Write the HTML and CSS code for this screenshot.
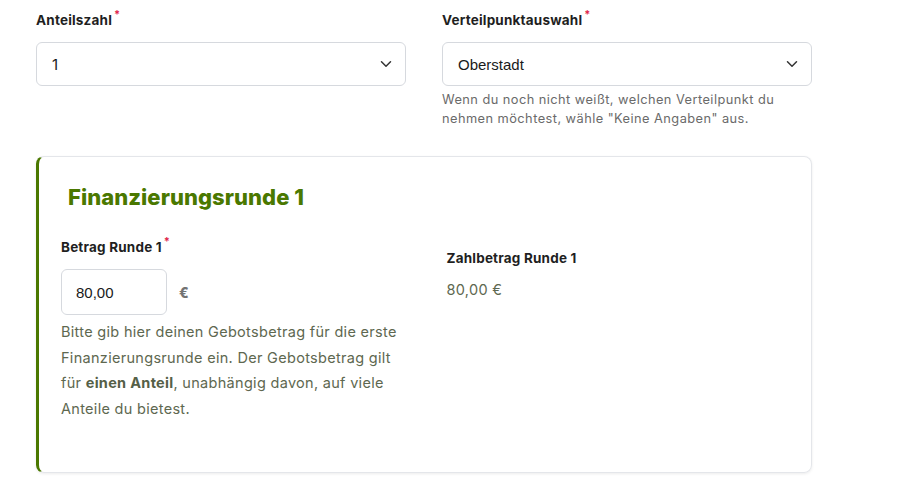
FILE: index.html
```html
<!DOCTYPE html>
<html lang="de">
<head>
    <meta charset="UTF-8">
    <meta name="viewport" content="width=device-width, initial-scale=1.0">
    <title>Gebot abgeben</title>
    <link rel="stylesheet" href="styles.css">
</head>
<body>
    <div class="form">
        <div class="row">
            <div class="field">
                <label class="label">Anteilszahl<sup class="req">*</sup></label>
                <div class="select">
                    <span class="select-value num">1</span>
                    <svg class="chevron" width="12" height="8" viewBox="0 0 12 8"><path d="M1.5 1.8 6 6.2l4.5-4.4" fill="none" stroke="#333" stroke-width="1.5" stroke-linecap="round" stroke-linejoin="round"/></svg>
                </div>
            </div>
            <div class="field">
                <label class="label">Verteilpunktauswahl<sup class="req">*</sup></label>
                <div class="select">
                    <span class="select-value">Oberstadt</span>
                    <svg class="chevron" width="12" height="8" viewBox="0 0 12 8"><path d="M1.5 1.8 6 6.2l4.5-4.4" fill="none" stroke="#333" stroke-width="1.5" stroke-linecap="round" stroke-linejoin="round"/></svg>
                </div>
                <p class="hint">Wenn du noch nicht weißt, welchen Verteilpunkt du nehmen möchtest, wähle "Keine Angaben" aus.</p>
            </div>
        </div>

        <div class="round-card">
            <h2 class="round-title">Finanzierungsrunde 1</h2>
            <div class="round-grid">
                <div class="round-col">
                    <label class="label">Betrag Runde 1<sup class="req">*</sup></label>
                    <div class="amount">
                        <input class="amount-input" type="text" value="80,00">
                        <span class="currency">€</span>
                    </div>
                    <p class="round-hint">Bitte gib hier deinen Gebotsbetrag für die erste Finanzierungsrunde ein. Der Gebotsbetrag gilt für <b>einen Anteil</b>, unabhängig davon, auf viele Anteile du bietest.</p>
                </div>
                <div class="round-col round-col-right">
                    <div class="label">Zahlbetrag Runde 1</div>
                    <div class="pay-value">80,00 €</div>
                </div>
            </div>
        </div>
    </div>
</body>
</html>
```

FILE: styles.css
```css
body {
    margin: 0;
    font-family: 'Inter', 'Open Sans', sans-serif;
    color: #222;
    background: #fff;
}

.form {
    width: 776px;
    padding: 10px 36px;
}

.row {
    display: grid;
    grid-template-columns: 370px 370px;
    gap: 36px;
}

.label {
    display: block;
    font-size: 13.5px;
    line-height: 20px;
    font-weight: 700;
    color: #1f1f1f;
    letter-spacing: 0.2px;
    margin-bottom: 12px;
}

.req {
    color: #e0264a;
    font-size: 11px;
    line-height: 0;
    margin-left: 2px;
    vertical-align: 7px;
}

.select {
    height: 44px;
    box-sizing: border-box;
    border: 1px solid #d6d9de;
    border-radius: 6px;
    display: flex;
    align-items: center;
    justify-content: space-between;
    padding: 0 13px 0 15px;
}

.select-value {
    font-family: 'Liberation Sans', Arial, sans-serif;
    font-size: 15px;
    color: #1a1a1a;
}

.select-value.num {
    font-family: 'Inter', sans-serif;
}

.hint {
    margin: 4px 0 0;
    font-size: 12.8px;
    line-height: 19px;
    color: #6a6a6a;
    letter-spacing: 0.45px;
    max-width: 340px;
}

.round-card {
    margin-top: 28px;
    border: 1px solid #e4e6ea;
    border-left: 3px solid #4a7800;
    border-radius: 8px;
    box-shadow: 0 1px 3px rgba(0, 0, 0, 0.08);
    padding: 24px 22px 46px 22px;
    height: 245px;
}

.round-title {
    margin: 0 0 24px;
    padding-left: 7px;
    font-size: 22px;
    line-height: 32px;
    font-weight: 800;
    color: #4a7800;
    letter-spacing: 0.05px;
}

.round-grid {
    display: grid;
    grid-template-columns: 1fr 1fr;
    gap: 43px;
}

.round-col-right {
    padding-top: 11px;
}

.amount {
    display: flex;
    align-items: center;
    gap: 12px;
    margin-top: 3px;
}

.amount-input {
    width: 106px;
    height: 46px;
    box-sizing: border-box;
    border: 1px solid #d6d9de;
    border-radius: 6px;
    padding: 0 14px;
    font-family: 'Liberation Sans', Arial, sans-serif;
    font-size: 15px;
    color: #1a1a1a;
}

.currency {
    font-size: 14px;
    font-weight: 800;
    color: #737373;
}

.round-hint {
    margin: 4px 0 0;
    font-size: 14.5px;
    line-height: 25.7px;
    color: #5e6850;
    letter-spacing: 0.3px;
    max-width: 338px;
}

.round-hint b {
    color: #556047;
}

.pay-value {
    font-size: 14.5px;
    line-height: 22px;
    color: #5e6850;
    margin-top: -1px;
    letter-spacing: 0.3px;
}
```
